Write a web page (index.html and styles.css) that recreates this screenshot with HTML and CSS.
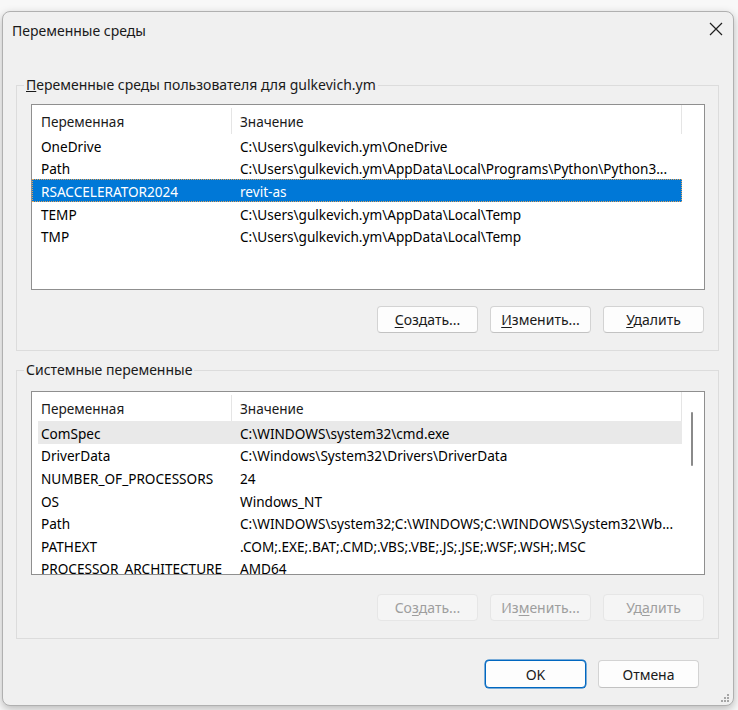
FILE: index.html
```html
<!DOCTYPE html>
<html lang="ru">
  <head>
    <meta charset="UTF-8" />
    <meta name="viewport" content="width=device-width, initial-scale=1.0" />
    <title>Переменные среды</title>
    <link rel="stylesheet" href="styles.css">
  </head>
  <body>
    <div class="window">
      <div class="titlebar">
        <span class="title">Переменные среды</span>
        <svg class="close" width="14" height="14" viewBox="0 0 14 14">
          <path d="M1 1 L13 13 M13 1 L1 13" stroke="#1f1f1f" stroke-width="1.2" fill="none" />
        </svg>
      </div>

      <fieldset class="group group-user">
        <legend><u>П</u>еременные среды пользователя для gulkevich.ym</legend>
        <div class="list list-user">
          <div class="cols">
            <div class="head">
              <div class="cell name">Переменная</div>
              <div class="cell value">Значение</div>
            </div>
            <div class="row"><div class="cell name">OneDrive</div><div class="cell value">C:\Users\gulkevich.ym\OneDrive</div></div>
            <div class="row"><div class="cell name">Path</div><div class="cell value">C:\Users\gulkevich.ym\AppData\Local\Programs\Python\Python3...</div></div>
            <div class="row selected"><div class="cell name">RSACCELERATOR2024</div><div class="cell value">revit-as</div></div>
            <div class="row"><div class="cell name">TEMP</div><div class="cell value">C:\Users\gulkevich.ym\AppData\Local\Temp</div></div>
            <div class="row"><div class="cell name">TMP</div><div class="cell value">C:\Users\gulkevich.ym\AppData\Local\Temp</div></div>
          </div>
          <div class="gutter"></div>
        </div>
        <div class="actions">
          <button class="btn"><u>С</u>оздать...</button>
          <button class="btn"><u>И</u>зменить...</button>
          <button class="btn"><u>У</u>далить</button>
        </div>
      </fieldset>

      <fieldset class="group group-system">
        <legend>Системные переменные</legend>
        <div class="list list-system">
          <div class="cols">
            <div class="head">
              <div class="cell name">Переменная</div>
              <div class="cell value">Значение</div>
            </div>
            <div class="row hot"><div class="cell name">ComSpec</div><div class="cell value">C:\WINDOWS\system32\cmd.exe</div></div>
            <div class="row"><div class="cell name">DriverData</div><div class="cell value">C:\Windows\System32\Drivers\DriverData</div></div>
            <div class="row"><div class="cell name">NUMBER_OF_PROCESSORS</div><div class="cell value">24</div></div>
            <div class="row"><div class="cell name">OS</div><div class="cell value">Windows_NT</div></div>
            <div class="row"><div class="cell name">Path</div><div class="cell value">C:\WINDOWS\system32;C:\WINDOWS;C:\WINDOWS\System32\Wb...</div></div>
            <div class="row"><div class="cell name">PATHEXT</div><div class="cell value">.COM;.EXE;.BAT;.CMD;.VBS;.VBE;.JS;.JSE;.WSF;.WSH;.MSC</div></div>
            <div class="row"><div class="cell name">PROCESSOR_ARCHITECTURE</div><div class="cell value">AMD64</div></div>
          </div>
          <div class="gutter">
            <div class="thumb"></div>
          </div>
        </div>
        <div class="actions">
          <button class="btn" disabled>Со<u>з</u>дать...</button>
          <button class="btn" disabled>Из<u>м</u>енить...</button>
          <button class="btn" disabled>Уд<u>а</u>лить</button>
        </div>
      </fieldset>

      <div class="dialog-buttons">
        <button class="btn default">OK</button>
        <button class="btn">Отмена</button>
      </div>

      <svg class="grip" width="9" height="9" viewBox="0 0 9 9">
        <rect x="7" y="0" width="2" height="2" fill="#a6a6a6" />
        <rect x="4" y="3" width="2" height="2" fill="#a6a6a6" />
        <rect x="7" y="3" width="2" height="2" fill="#a6a6a6" />
        <rect x="1" y="6" width="2" height="2" fill="#a6a6a6" />
        <rect x="4" y="6" width="2" height="2" fill="#a6a6a6" />
        <rect x="7" y="6" width="2" height="2" fill="#a6a6a6" />
      </svg>
    </div>
  </body>
</html>
```

FILE: styles.css
```css
* {
  margin: 0;
  padding: 0;
  box-sizing: border-box;
}

body {
  height: 710px;
  overflow: hidden;
  background: #f8f8f8;
  font-family: "Noto Sans", "Open Sans", sans-serif;
  font-size: 13.6px;
  color: #000;
}

.window {
  position: relative;
  width: 732px;
  height: 695px;
  margin: 11px 0 0 2px;
  background: #f0f0f0;
  border: 1px solid #b0b0b0;
  border-radius: 8px;
  box-shadow: 0 3px 8px rgba(0, 0, 0, 0.25);
}

.titlebar {
  height: 37px;
  display: flex;
  align-items: center;
  justify-content: space-between;
  padding: 0 10px 0 9px;
}

.title {
  font-size: 14px;
  color: #1a1a1a;
}

.close {
  margin-top: -3px;
}

/* group boxes */
.group {
  width: 703px;
  margin-left: 13px;
  border: 1px solid #dcdcdc;
  padding: 10px 13px 17px 14px;
}

.group-user {
  margin-top: 27px;
}

.group-system {
  margin-top: 10px;
  padding-top: 12px;
}

.group legend {
  margin-left: -7px;
  padding: 0 2px;
  line-height: 18px;
  font-size: 14px;
  color: #1a1a1a;
}

/* list views */
.list {
  display: flex;
  background: #fff;
  border: 1px solid #8f8f8f;
  overflow: hidden;
}

.list-user {
  height: 186px;
}

.list-system {
  height: 184px;
}

.cols {
  width: 650px;
  flex: none;
}

.gutter {
  flex: 1;
  position: relative;
}

.thumb {
  position: absolute;
  left: 9px;
  top: 20px;
  width: 2px;
  height: 54px;
  border-radius: 1px;
  background: #8a8a8a;
}

.head,
.row {
  display: flex;
  white-space: nowrap;
}

.head {
  height: 29px;
  padding-top: 3px;
  align-items: center;
  color: #1a1a1a;
  border-right: 1px solid #e5e5e5;
}

.row {
  height: 22.6px;
  padding-top: 2px;
  align-items: center;
}

.cell {
  overflow: hidden;
}

.name {
  width: 200px;
  padding-left: 9px;
}

.value {
  flex: 1;
  padding-left: 8px;
}

.head .name {
  border-right: 1px solid #e5e5e5;
  height: 26px;
  display: flex;
  align-items: center;
}

.row.selected {
  background: #0078d7;
  color: #fff;
  outline: 1px dotted #e3a35a;
  outline-offset: -1px;
}

.row.hot {
  background: #e9e9e9;
  box-shadow: inset 6px 0 0 #fff;
}

/* buttons */
.actions {
  display: flex;
  justify-content: flex-end;
  gap: 12px;
  margin-top: 16px;
  padding-right: 1px;
}

.group-system .actions {
  margin-top: 19px;
}

.btn {
  width: 101px;
  height: 27px;
  font-family: inherit;
  font-size: 14px;
  color: #1a1a1a;
  background: #fdfdfd;
  border: 1px solid #d3d3d3;
  border-bottom-color: #c2c2c2;
  border-radius: 4px;
}

.btn u {
  text-underline-offset: 2px;
}

.btn:disabled {
  color: #9e9e9e;
  background: #f5f5f5;
  border-color: #e6e6e6;
}

.dialog-buttons {
  display: flex;
  justify-content: flex-end;
  gap: 12px;
  margin-top: 21px;
  padding-right: 34px;
}

.dialog-buttons .btn {
  height: 28px;
}

.btn.default {
  border: 1px solid #0067c0;
  box-shadow: 0 0 0 0.5px #0067c0;
}

.grip {
  position: absolute;
  right: 4px;
  bottom: 2px;
}
```
